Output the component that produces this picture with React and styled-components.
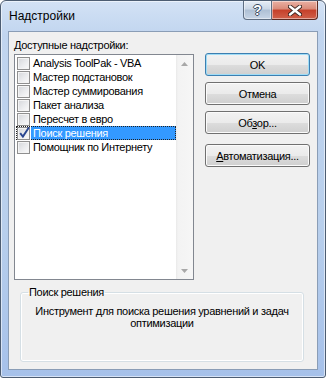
import React from "react";
import styled, { createGlobalStyle } from "styled-components";

const GlobalStyle = createGlobalStyle`
  html, body {
    margin: 0;
    padding: 0;
    background: #ffffff;
  }
  body {
    font-family: "Liberation Sans", Arial, sans-serif;
  }
`;

const UI_FONT = `"Liberation Sans", Arial, sans-serif`;

const Window = styled.div`
  width: 326px;
  height: 378px;
  box-sizing: border-box;
  display: flex;
  flex-direction: column;
  border: 1px solid #4d5d72;
  border-radius: 6px 6px 3px 3px;
  background: linear-gradient(
    to bottom,
    #d3e2f5 0%,
    #c1d5ef 9%,
    #b8cfec 60%,
    #a6c1ea 100%
  );
  box-shadow: inset 0 0 0 1px rgba(255, 255, 255, 0.55);
  overflow: hidden;
`;

const TitleBar = styled.div`
  display: flex;
  align-items: flex-start;
  height: 30px;
  flex-shrink: 0;
  padding: 0 7px 0 8px;
`;

const Title = styled.div`
  font-family: ${UI_FONT};
  font-size: 12px;
  line-height: 14px;
  color: #000;
  padding-top: 8px;
`;

const CaptionButtons = styled.div`
  margin-left: auto;
  display: flex;
`;

const CaptionButton = styled.div`
  width: ${(p) => (p.$close ? 46 : 29)}px;
  height: 19px;
  box-sizing: border-box;
  display: flex;
  align-items: center;
  justify-content: center;
  border: 1px solid ${(p) => (p.$close ? "#5b2a22" : "#5f6e82")};
  border-top: none;
  border-left: ${(p) => (p.$close ? "none" : undefined)};
  border-radius: ${(p) => (p.$close ? "0 0 4px 0" : "0 0 0 4px")};
  background: ${(p) =>
    p.$close
      ? "linear-gradient(to bottom, #eab1a4 0%, #d98a78 45%, #c5402a 50%, #d0604a 100%)"
      : "linear-gradient(to bottom, #e6edf6 0%, #cbd7e6 45%, #aebfd4 50%, #c7d5e6 100%)"};
  box-shadow: inset 0 0 0 1px rgba(255, 255, 255, 0.45);
`;

const HelpGlyph = styled.span`
  font-family: ${UI_FONT};
  font-weight: bold;
  font-size: 14px;
  line-height: 14px;
  color: #fff;
  text-shadow: 1px 0 0 #3b4b5e, -1px 0 0 #3b4b5e, 0 1px 0 #3b4b5e,
    0 -1px 0 #3b4b5e;
`;

const Client = styled.div`
  flex: 1;
  margin: 0 7px 7px 7px;
  border: 1px solid #8a9db6;
  background: #f0f0f0;
  display: flex;
  flex-direction: column;
  padding: 6px 7px 0 5px;
  font-family: ${UI_FONT};
  font-size: 11px;
  letter-spacing: -0.3px;
  color: #000;
`;

const TopRow = styled.div`
  display: flex;
  gap: 11px;
`;

const ListColumn = styled.div`
  display: flex;
  flex-direction: column;
  width: 180px;
`;

const FieldLabel = styled.div`
  line-height: 14px;
  height: 14px;
  margin-bottom: 2px;
`;

const ListBox = styled.div`
  height: 226px;
  box-sizing: border-box;
  border: 1px solid #828790;
  background: #fff;
  display: flex;
`;

const Items = styled.ul`
  flex: 1;
  margin: 0;
  padding: 1px 0 0 0;
  list-style: none;
`;

const Item = styled.li`
  display: flex;
  align-items: center;
  height: 14px;
  margin-left: 1px;
  padding-left: 1px;
  outline: ${(p) => (p.$focused ? "1px dotted #222" : "none")};
  outline-offset: -1px;
`;

const Box = styled.span`
  position: relative;
  width: 13px;
  height: 13px;
  box-sizing: border-box;
  flex-shrink: 0;
  border: 1px solid #8f8f8f;
  background: linear-gradient(135deg, #d4d6da 0%, #ebecee 55%, #fbfbfb 100%);
  box-shadow: inset 0 0 0 1px #f4f4f4;
`;

const Tick = styled.svg`
  position: absolute;
  left: 0;
  top: -2px;
  width: 13px;
  height: 13px;
  overflow: visible;
`;

const ItemText = styled.span`
  flex: 1;
  margin-left: 1px;
  padding-left: 2px;
  line-height: 14px;
  white-space: nowrap;
  background: ${(p) => (p.$selected ? "#3399ff" : "transparent")};
  color: ${(p) => (p.$selected ? "#fff" : "#000")};
`;

const ScrollBar = styled.div`
  width: 17px;
  display: flex;
  flex-direction: column;
  justify-content: space-between;
  background: linear-gradient(to right, #e9e9e9 0, #f3f3f3 2px, #f6f6f6 100%);
`;

const ScrollArrow = styled.div`
  height: 17px;
  display: flex;
  align-items: center;
  justify-content: center;
`;

const ButtonColumn = styled.div`
  display: flex;
  flex-direction: column;
  gap: 6px;
  padding-top: 15px;
`;

const Button = styled.button`
  width: 105px;
  height: 23px;
  padding: 0;
  margin-top: ${(p) => (p.$apart ? "4px" : "0")};
  border: 1px solid ${(p) => (p.$default ? "#3c7fb1" : "#707070")};
  border-radius: 3px;
  background: linear-gradient(
    to bottom,
    #f2f2f2 0%,
    #ebebeb 50%,
    #dddddd 51%,
    #cfcfcf 100%
  );
  box-shadow: inset 0 0 0 1px ${(p) => (p.$default ? "#9fdcf6" : "#fbfbfb")};
  font-family: ${UI_FONT};
  font-size: 11px;
  letter-spacing: -0.3px;
  color: #000;
`;

const GroupBox = styled.fieldset`
  margin: 6px 6px 0 6px;
  height: 76px;
  box-sizing: border-box;
  padding: 6px 4px 0 4px;
  border: 1px solid #d5dfe5;
  border-radius: 3px;
  box-shadow: inset 0 0 0 1px #ffffff;
  min-width: 0;
`;

const GroupLegend = styled.legend`
  margin-left: 3px;
  padding: 0 1px;
  line-height: 13px;
`;

const Description = styled.p`
  margin: 0;
  text-align: center;
  line-height: 12px;
`;

const addins = [
  { name: "Analysis ToolPak - VBA" },
  { name: "Мастер подстановок" },
  { name: "Мастер суммирования" },
  { name: "Пакет анализа" },
  { name: "Пересчет в евро" },
  { name: "Поиск решения", checked: true, selected: true },
  { name: "Помощник по Интернету" },
];

const Arrow = ({ down }) => (
  <svg width="7" height="4" viewBox="0 0 7 4">
    <path
      d={down ? "M0 0 H7 L3.5 4 Z" : "M0 4 H7 L3.5 0 Z"}
      fill="#a8a8a8"
    />
  </svg>
);

const CloseGlyph = () => (
  <svg width="14" height="11" viewBox="0 0 14 11">
    <path
      d="M2 1.5 L12 9.5 M12 1.5 L2 9.5"
      stroke="#3a2520"
      strokeWidth="4.2"
      strokeLinecap="round"
    />
    <path
      d="M2 1.5 L12 9.5 M12 1.5 L2 9.5"
      stroke="#ffffff"
      strokeWidth="2.4"
      strokeLinecap="round"
    />
  </svg>
);

const App = () => {
  return (
    <>
      <GlobalStyle />
      <Window>
        <TitleBar>
          <Title>Надстройки</Title>
          <CaptionButtons>
            <CaptionButton>
              <HelpGlyph>?</HelpGlyph>
            </CaptionButton>
            <CaptionButton $close>
              <CloseGlyph />
            </CaptionButton>
          </CaptionButtons>
        </TitleBar>

        <Client>
          <TopRow>
            <ListColumn>
              <FieldLabel>
                <u>Д</u>оступные надстройки:
              </FieldLabel>
              <ListBox>
                <Items>
                  {addins.map((addin) => (
                    <Item key={addin.name} $focused={addin.selected}>
                      <Box>
                        {addin.checked ? (
                          <Tick viewBox="0 0 13 13">
                            <path
                              d="M2.2 7.2 L4.9 10.6 L11 1.2"
                              fill="none"
                              stroke="#2a4690"
                              strokeWidth="1.9"
                            />
                          </Tick>
                        ) : null}
                      </Box>
                      <ItemText $selected={addin.selected}>{addin.name}</ItemText>
                    </Item>
                  ))}
                </Items>
                <ScrollBar>
                  <ScrollArrow>
                    <Arrow />
                  </ScrollArrow>
                  <ScrollArrow>
                    <Arrow down />
                  </ScrollArrow>
                </ScrollBar>
              </ListBox>
            </ListColumn>

            <ButtonColumn>
              <Button $default>OK</Button>
              <Button>Отмена</Button>
              <Button>
                Об<u>з</u>ор...
              </Button>
              <Button $apart>
                <u>А</u>втоматизация...
              </Button>
            </ButtonColumn>
          </TopRow>

          <GroupBox>
            <GroupLegend>Поиск решения</GroupLegend>
            <Description>
              Инструмент для поиска решения уравнений и задач
              <br />
              оптимизации
            </Description>
          </GroupBox>
        </Client>
      </Window>
    </>
  );
};

export default App;
